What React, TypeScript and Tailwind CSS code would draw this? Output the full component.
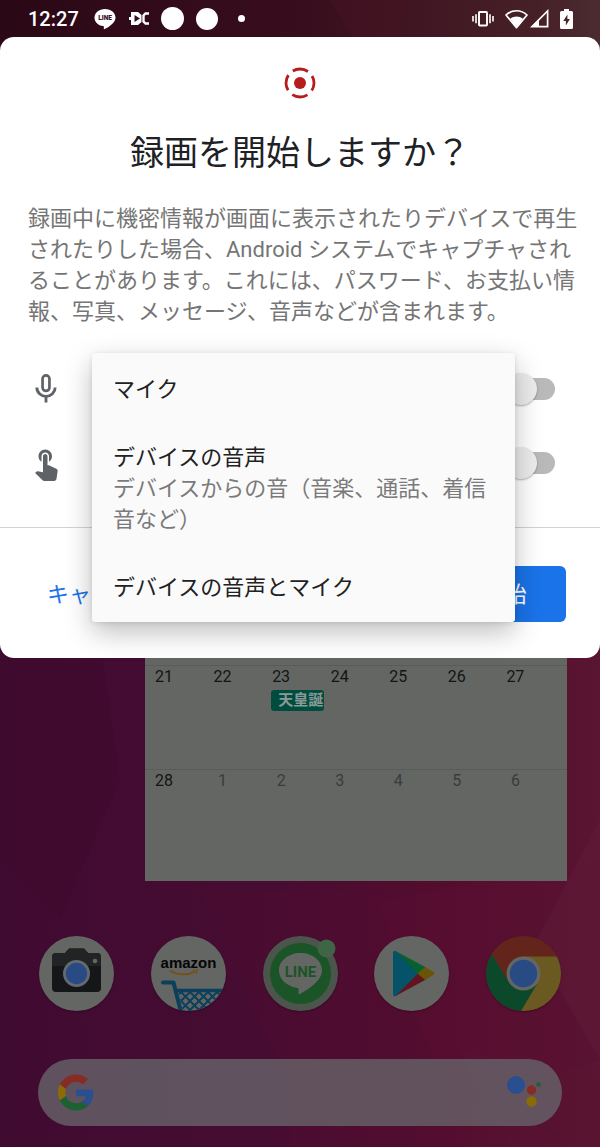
import React from "react";

function Wallpaper() {
  return (
    <svg
      className="absolute inset-0 h-full w-full"
      viewBox="0 0 600 1147"
      preserveAspectRatio="none"
      aria-hidden="true"
    >
      <defs>
        <linearGradient id="wall" x1="0" y1="0" x2="1" y2="0">
          <stop offset="0" stopColor="#400b31" />
          <stop offset="0.45" stopColor="#470c32" />
          <stop offset="0.75" stopColor="#540d2e" />
          <stop offset="1" stopColor="#5a1532" />
        </linearGradient>
        <linearGradient id="top" x1="0" y1="0" x2="1" y2="0">
          <stop offset="0" stopColor="#2b0816" />
          <stop offset="0.5" stopColor="#380d1d" />
          <stop offset="0.9" stopColor="#472027" />
          <stop offset="1" stopColor="#4a2c30" />
        </linearGradient>
      </defs>
      <rect width="600" height="1147" fill="url(#wall)" />
      <rect width="600" height="60" fill="url(#top)" />
      <polygon points="330,0 415,0 390,50 360,50" fill="#4a1424" opacity="0.35" />
      <polygon points="0,640 100,640 120,780 60,920 0,860" fill="#3c0a2b" opacity="0.4" />
      <polygon points="200,890 380,890 440,1147 290,1147 288,1080" fill="#530d33" opacity="0.3" />
      <polygon points="380,900 600,860 600,1060 455,1110 400,980" fill="#5b0f35" opacity="0.35" />
      <polygon points="600,820 534,945 600,1060" fill="#5e1a36" opacity="0.6" />
      <polygon points="460,1050 600,1080 600,1147 510,1147" fill="#5a1334" opacity="0.35" />
    </svg>
  );
}

function StatusBar() {
  return (
    <header className="relative flex h-[37px] items-center justify-between pl-7 pr-[27px] text-white">
      <div className="flex items-center">
        <time className="w-[66px] text-[20px] leading-6 font-medium">12:27</time>
        <svg width="22" height="22" viewBox="0 0 22 22" aria-label="LINE">
          <path d="M11 1C5 1 .5 4.800 .5 9.700c0 4.300 3.600 7.700 8.600 8.400 1 .2.900.8.700 2.400-.1.700.4.800 1 .5 3-1.500 10.700-6 10.700-11.300C21.500 4.800 17 1 11 1z" fill="#fff" />
          <text x="11" y="12" textAnchor="middle" fontSize="6.500" fontWeight="900" fontFamily="Roboto" fill="#35101f">LINE</text>
        </svg>
        <svg className="ml-[13px]" width="20" height="13" viewBox="0 0 20 13" aria-hidden="true">
          <path d="M2 0h7l3.500 3v7L9 13H2V8H0V5h2z" fill="#fff" />
          <path d="M5.500 3v7l5.500-3.500z" fill="#35101f" />
          <path d="M20 1.500h-3.500l-2 2v6l2 2H20" stroke="#fff" strokeWidth="2.400" fill="none" />
        </svg>
        <span className="ml-3 size-[23px] rounded-full bg-white" />
        <span className="ml-3 size-[22px] rounded-full bg-white" />
        <span className="ml-5 size-[7px] rounded-full bg-white" />
      </div>
      <div className="flex items-center">
        <svg width="22" height="18" viewBox="0 0 22 18" fill="none" stroke="#fff" aria-label="vibrate">
          <rect x="7" y="2" width="8" height="13.500" rx="0.800" strokeWidth="1.900" />
          <path d="M4 4.200v9M1 6v5.500M18 4.200v9M21 6v5.500" strokeWidth="1.600" />
        </svg>
        <svg className="ml-[11px]" width="23" height="20" viewBox="0 0 23 20" aria-label="wifi">
          <path d="M1 6C7 0.300 16 0.300 22 6L11.500 18.600z" fill="none" stroke="#fff" strokeWidth="1.700" strokeLinejoin="round" />
          <path d="M5.200 9.800c3.600-3 9-3 12.600 0L11.500 18.500z" fill="#fff" />
        </svg>
        <svg className="ml-[2px]" width="19" height="19" viewBox="0 0 19 19" aria-label="signal">
          <path d="M17.600 2v15.600H2z" fill="none" stroke="#fff" strokeWidth="1.700" />
          <path d="M1 18L9 10V18z" fill="#fff" />
        </svg>
        <svg className="ml-[11px]" width="13" height="20" viewBox="0 0 13 20" aria-label="battery">
          <path d="M4 0h5v2h2.500a1.500 1.500 0 0 1 1.500 1.500v15a1.500 1.500 0 0 1-1.500 1.500h-10A1.500 1.500 0 0 1 0 18.500v-15A1.500 1.500 0 0 1 1.500 2H4z" fill="#fff" />
          <path d="M7.400 5.500L3.300 12h2.600v4.500L9.900 10H7.400z" fill="#4a2229" />
        </svg>
      </div>
    </header>
  );
}

function SettingRow({ label, children }: { label: string; children: React.ReactNode }) {
  return (
    <div className="flex h-9 items-center justify-between pl-7 pr-[45px]">
      {children}
      <input
        type="checkbox"
        role="switch"
        aria-label={label}
        className="relative h-[22px] w-12 appearance-none rounded-full bg-[#b9b9b9] before:absolute before:-left-[2px] before:-top-[5px] before:size-8 before:rounded-full before:bg-[#ececec] before:shadow-[0_1px_2px_rgba(0,0,0,0.3)]"
      />
    </div>
  );
}

function SourceMenu() {
  return (
    <div
      role="listbox"
      aria-label="音声"
      className="absolute left-[92px] right-[85px] top-[316px] flex flex-col rounded-[3px] bg-[#fafafa] text-[22px] leading-[31px] text-[#212121] shadow-[0_10px_28px_rgba(0,0,0,0.26),0_1px_5px_rgba(0,0,0,0.1)]"
    >
      <button role="option" aria-selected="false" className="h-[72px] px-[21px] text-left">マイク</button>
      <button role="option" aria-selected="false" className="px-[21px] py-[17px] text-left">
        <span className="block">デバイスの音声</span>
        <span className="block text-[#7a7a7a]">デバイスからの音（音楽、通話、着信音など）</span>
      </button>
      <button role="option" aria-selected="false" className="h-[70px] px-[21px] text-left">デバイスの音声とマイク</button>
    </div>
  );
}

function RecordDialog() {
  return (
    <section role="dialog" aria-labelledby="dialog-title" className="relative rounded-[14px] bg-white pb-9 pt-[30px]">
      <svg className="mx-auto block" width="32" height="32" viewBox="0 0 32 32" aria-hidden="true">
        <circle cx="16" cy="16" r="14" fill="none" stroke="#b71c1c" strokeWidth="2.800" strokeDasharray="16 6" strokeDashoffset="8" />
        <circle cx="16" cy="16" r="6" fill="#b71c1c" />
      </svg>
      <h1 id="dialog-title" className="mt-8 text-center text-[34px] leading-[44px] text-[#202124]">録画を開始しますか？</h1>
      <p className="mt-7 pl-7 pr-5 text-[22px] leading-[31px] text-[#757575]">
        録画中に機密情報が画面に表示されたりデバイスで再生されたりした場合、Android システムでキャプチャされることがあります。これには、パスワード、お支払い情報、写真、メッセージ、音声などが含まれます。
      </p>
      <div className="mt-11 flex flex-col gap-[38px] border-b border-[#d3d3d3] pb-[46px]">
        <SettingRow label="音声">
          <svg width="36" height="36" viewBox="0 0 24 24" fill="none" stroke="#5f6368" aria-hidden="true">
            <rect x="9.700" y="2.900" width="4.600" height="10.400" rx="2.300" strokeWidth="1.800" />
            <path d="M5.900 11a6.100 5.900 0 0 0 12.200 0M12 17v4" strokeWidth="1.900" />
          </svg>
        </SettingRow>
        <SettingRow label="タップ">
          <svg width="36" height="36" viewBox="0 0 24 24" fill="#5f6368" aria-hidden="true">
            <path d="M9 11.240V7.500C9 6.120 10.120 5 11.500 5S14 6.120 14 7.500v3.740c1.210-.810 2-2.180 2-3.740C16 5.010 13.990 3 11.500 3S7 5.010 7 7.500c0 1.560.790 2.930 2 3.740zm9.840 4.630l-4.540-2.260c-.170-.070-.350-.110-.540-.110H13v-6c0-.830-.670-1.500-1.500-1.500S10 6.670 10 7.500v10.740l-3.430-.720c-.080-.010-.150-.030-.240-.030-.310 0-.590.130-.790.330l-.790.800 4.940 4.940c.270.270.650.440 1.060.440h6.790c.750 0 1.330-.550 1.440-1.280l.750-5.270c.010-.070.020-.140.020-.200 0-.620-.380-1.160-.910-1.380z" />
          </svg>
        </SettingRow>
      </div>
      <div className="mt-[38px] flex h-14 items-center justify-between pl-[47px] pr-[34px] text-[22px] leading-[31px]">
        <button aria-label="キャンセル" className="text-[#1a73e8]">キャ</button>
        <button className="h-14 w-[123px] rounded-[6px] bg-[#1a73e8] text-white">開始</button>
      </div>
      <SourceMenu />
    </section>
  );
}

const weeks = [
  { height: "h-[104px]", days: [21, 22, 23, 24, 25, 26, 27] },
  { height: "h-[111px]", days: [28, 1, 2, 3, 4, 5, 6] },
];

function Calendar() {
  return (
    <div className="relative ml-[145px] mr-[33px] bg-[#646664] pt-[7px]">
      <table className="w-full table-fixed border-collapse text-[16px] leading-5 text-[#131414]">
        <tbody>
          {weeks.map((week, w) => (
            <tr key={w} className={`${week.height} border-t border-[#595b59]`}>
              {week.days.map((day) => (
                <td key={day} className="p-0 pl-[9px] pt-px align-top">
                  <span className={`block w-5 text-center ${w === 1 && day < 7 ? "text-[#3a3c3a]" : ""}`}>{day}</span>
                  {day === 23 && (
                    <span className="mt-[3px] block h-[21px] w-[53px] whitespace-nowrap rounded-[3px] bg-[#004d40] pl-[7px] text-[15px] font-bold leading-5 text-[#8a9994]">
                      天皇誕
                    </span>
                  )}
                </td>
              ))}
              <td className="w-3 p-0" />
            </tr>
          ))}
        </tbody>
      </table>
    </div>
  );
}

function CameraIcon() {
  return (
    <svg width="75" height="75" viewBox="0 0 75 75" aria-hidden="true">
      <circle cx="37.500" cy="37.500" r="37.500" fill="#646664" />
      <path d="M17 17h9l4-4.500h15L49 17h9a4 4 0 0 1 4 4v31a4 4 0 0 1-4 4H17a4 4 0 0 1-4-4V21a4 4 0 0 1 4-4z" fill="#151617" />
      <path d="M17 17h9l4-4.500h15L49 17h9a4 4 0 0 1 4 4v9H13v-9a4 4 0 0 1 4-4z" fill="#222324" />
      <circle cx="37.500" cy="37.500" r="13.500" fill="#656a72" />
      <circle cx="37.500" cy="37.500" r="10.700" fill="#294b84" />
      <circle cx="56" cy="25" r="2.300" fill="#646664" />
    </svg>
  );
}

function AmazonIcon() {
  return (
    <svg width="75" height="75" viewBox="0 0 75 75" aria-label="amazon">
      <defs>
        <clipPath id="az"><circle cx="37.500" cy="37.500" r="37.500" /></clipPath>
        <pattern id="mesh" width="9" height="9" x="30" y="56" patternUnits="userSpaceOnUse">
          <path d="M0 0l9 9M9 0L0 9" stroke="#0b3f5c" strokeWidth="2" />
        </pattern>
      </defs>
      <g clipPath="url(#az)">
        <rect width="75" height="75" fill="#646664" />
        <text x="37.500" y="32" textAnchor="middle" fontSize="15" fontWeight="700" fontFamily="Liberation Sans" fill="#050505">amazon</text>
        <path d="M19 34.500c8 5 18 5 25 1" stroke="#7a4d12" strokeWidth="1.700" fill="none" />
        <path d="M41.500 34h5l-1.500 4" stroke="#7a4d12" strokeWidth="1.200" fill="none" />
        <path d="M27 54h48v21H32z" fill="url(#mesh)" />
        <path d="M12 46.500h10.500L30 76" stroke="#0b3f5c" strokeWidth="4" strokeLinecap="round" strokeLinejoin="round" fill="none" />
        <path d="M26 54.500h50" stroke="#0b3f5c" strokeWidth="3.500" />
      </g>
    </svg>
  );
}

function LineIcon() {
  return (
    <svg width="75" height="75" viewBox="0 0 75 75" overflow="visible" aria-label="LINE">
      <circle cx="37.500" cy="37.500" r="37.500" fill="#4b554c" />
      <circle cx="37.500" cy="37.500" r="30.500" fill="#1b5426" />
      <path d="M37.500 17C25 17 16 25 16 34.500c0 8.500 7.500 15.500 17.500 17.300 2.600.5 2.400 1.700 1.900 4.700-.2 1.500.6 2 2 1.200C43.500 54.500 59 45 59 34.500 59 25 50 17 37.500 17z" fill="#646664" />
      <text x="37.500" y="40.500" textAnchor="middle" fontSize="15" fontWeight="700" fontFamily="Roboto" fill="#1b5426">LINE</text>
      <circle cx="63.500" cy="12.500" r="9" fill="#406546" />
    </svg>
  );
}

function PlayIcon() {
  return (
    <svg width="75" height="75" viewBox="0 0 75 75" aria-hidden="true">
      <circle cx="37.500" cy="37.500" r="37.500" fill="#646664" />
      <path d="M19 16.500a2 2 0 0 1 3-1.500L45 37.500 22 60a2 2 0 0 1-3-1.500z" fill="#045368" />
      <path d="M21.500 15L52 31.500l-8 6.500z" fill="#06602f" />
      <path d="M21.500 60L52 43.500l-8-6z" fill="#641320" />
      <path d="M51 31l8.500 5c1.300.8 1.300 2 0 2.800L51 44l-7.500-6.500z" fill="#695505" />
    </svg>
  );
}

function ChromeIcon() {
  return (
    <svg width="75" height="75" viewBox="0 0 75 75" aria-hidden="true">
      <defs><clipPath id="cr"><circle cx="37.500" cy="37.500" r="37.500" /></clipPath></defs>
      <g clipPath="url(#cr)">
        <rect width="75" height="75" fill="#63241c" />
        <path d="M5 17L22 45l30 3-17 27H0V17z" fill="#0c482a" />
        <path d="M37 20.500h38V75H35l16-27z" fill="#6b5922" />
        <circle cx="37.500" cy="37.500" r="17" fill="#646664" />
        <circle cx="37.500" cy="37.500" r="13.700" fill="#294b84" />
      </g>
    </svg>
  );
}

function Dock() {
  const apps = [
    { label: "Camera", icon: <CameraIcon /> },
    { label: "Amazon", icon: <AmazonIcon /> },
    { label: "LINE", icon: <LineIcon /> },
    { label: "Play", icon: <PlayIcon /> },
    { label: "Chrome", icon: <ChromeIcon /> },
  ];
  return (
    <nav className="relative mt-[55px] flex justify-between px-[39px]">
      {apps.map((app) => (
        <button key={app.label} aria-label={app.label} className="rounded-full shadow-[0_1px_2px_rgba(0,0,0,0.3)]">
          {app.icon}
        </button>
      ))}
    </nav>
  );
}

function SearchBar() {
  return (
    <div className="relative mx-[38px] mt-12 mb-[21px] flex h-[67px] items-center justify-between rounded-full bg-[#67646a]/80 pl-5 pr-[20px]">
      <svg width="36" height="37" viewBox="0 0 48 48" aria-label="Google">
        <path fill="#862c24" d="M24 9.500c3.540 0 6.710 1.220 9.210 3.600l6.850-6.850C35.900 2.380 30.470 0 24 0 14.620 0 6.510 5.380 2.560 13.220l7.980 6.190C12.430 13.720 17.740 9.500 24 9.500z" />
        <path fill="#294f91" d="M46.980 24.550c0-1.570-.150-3.090-.380-4.550H24v9.020h12.940c-.580 2.960-2.260 5.480-4.780 7.180l7.730 6c4.510-4.180 7.090-10.360 7.090-17.650z" />
        <path fill="#8b6b05" d="M10.530 28.590c-.480-1.450-.760-2.990-.760-4.590s.270-3.140.760-4.590l-7.980-6.190C.920 16.460 0 20.120 0 24c0 3.880.920 7.540 2.560 10.780l7.970-6.190z" />
        <path fill="#1d6130" d="M24 48c6.480 0 11.930-2.130 15.890-5.810l-7.730-6c-2.150 1.450-4.920 2.300-8.160 2.300-6.260 0-11.570-4.220-13.470-9.910l-7.980 6.190C6.510 42.620 14.620 48 24 48z" />
      </svg>
      <input aria-label="Google" className="min-w-0 flex-1 bg-transparent outline-none" />
      <svg width="36" height="32" viewBox="0 0 36 32" aria-label="Assistant">
        <circle cx="10" cy="9" r="9" fill="#294f91" />
        <circle cx="25.500" cy="14" r="4.700" fill="#862c24" />
        <circle cx="25.500" cy="25.500" r="5.200" fill="#8b6b05" />
        <circle cx="32.500" cy="8.500" r="2.200" fill="#1d6130" />
      </svg>
    </div>
  );
}

export default function App() {
  return (
    <main className="relative flex min-h-screen flex-col overflow-hidden bg-[#400b31] font-[Roboto,'Noto_Sans_CJK_JP',sans-serif]" lang="ja">
      <Wallpaper />
      <StatusBar />
      <div className="relative z-10">
        <RecordDialog />
      </div>
      <Calendar />
      <Dock />
      <SearchBar />
    </main>
  );
}
